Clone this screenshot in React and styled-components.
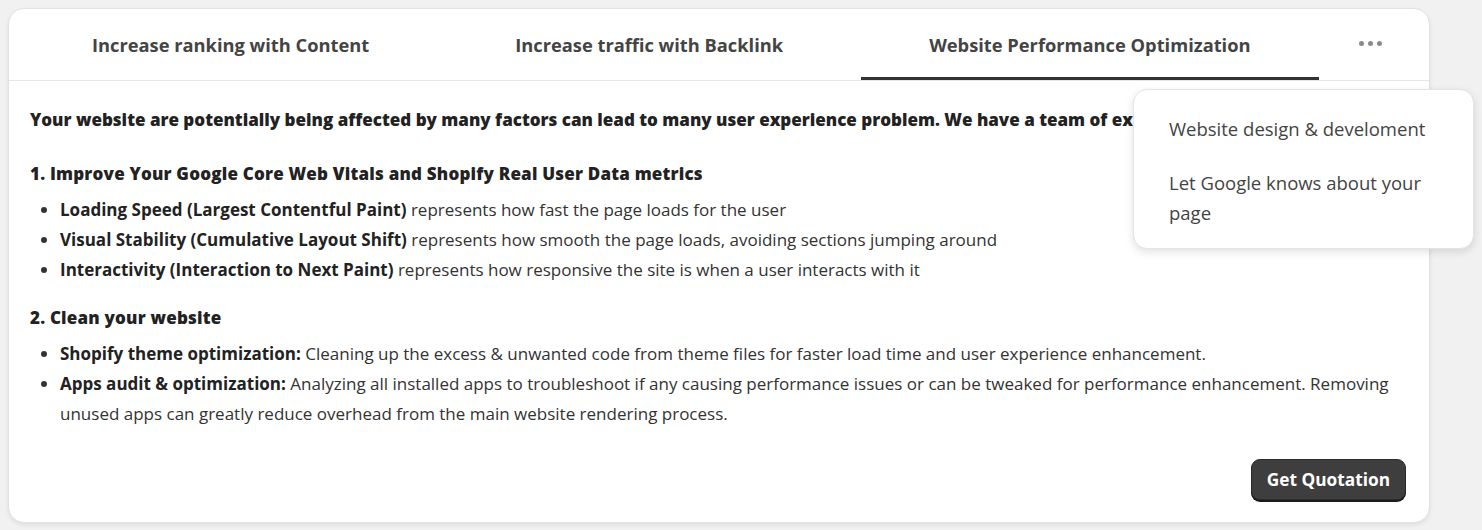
import React from "react";
import styled, { createGlobalStyle } from "styled-components";

const GlobalStyle = createGlobalStyle`
  body {
    margin: 0;
    background: #f1f1f1;
    font-family: "Open Sans", "Noto Sans", Arial, sans-serif;
    color: #333;
  }
`;

const Page = styled.div`
  padding: 8px;
`;

const Card = styled.div`
  position: relative;
  width: 1422px;
  box-sizing: border-box;
  height: 515px;
  background: #fff;
  border: 1px solid #e2e2e2;
  border-radius: 16px;
  box-shadow: 0 2px 4px rgba(0, 0, 0, 0.08);
  display: flex;
  flex-direction: column;
`;

const TabBar = styled.div`
  display: flex;
  align-items: stretch;
  gap: 10px;
  padding: 0 15px;
  height: 71px;
  border-bottom: 1px solid #e6e6e6;
`;

const Tab = styled.div`
  display: flex;
  align-items: center;
  justify-content: center;
  padding: 3px 68px 0;
  font-size: 18.3px;
  font-weight: 700;
  color: #444;
  border-bottom: 3px solid ${(p) => (p.$active ? "#333" : "transparent")};
  white-space: nowrap;
`;

const More = styled.div`
  flex: 1;
  display: flex;
  align-items: center;
  justify-content: center;
  gap: 4px;
  padding: 0 2px 2px 0;
`;

const Dot = styled.span`
  width: 5px;
  height: 5px;
  border-radius: 50%;
  background: #8a8a8a;
`;

const Menu = styled.div`
  position: absolute;
  left: 1124px;
  top: 80px;
  width: 341px;
  box-sizing: border-box;
  padding: 24px 35px 20px;
  background: #fff;
  border: 1px solid #e4e4e4;
  border-radius: 14px;
  box-shadow: 0 3px 8px rgba(0, 0, 0, 0.12);
  z-index: 2;
`;

const MenuItem = styled.div`
  font-size: 18.5px;
  line-height: 30px;
  color: #444;
  & + & {
    margin-top: 24px;
  }
`;

const Body = styled.div`
  flex: 1;
  display: flex;
  flex-direction: column;
  padding: 24px 21px 22px;
  overflow: hidden;
`;

const Intro = styled.p`
  margin: 0;
  font-size: 17px;
  font-weight: 800;
  line-height: 30px;
  color: #222;
  white-space: nowrap;
`;

const SectionTitle = styled.h3`
  margin: ${(p) => p.$top}px 0 6px;
  font-size: 17px;
  font-weight: 800;
  letter-spacing: 0.2px;
  line-height: 30px;
  color: #222;
`;

const List = styled.ul`
  margin: 0;
  padding-left: 30px;
`;

const Item = styled.li`
  font-size: 17px;
  line-height: 30px;
  color: #333;
`;

const Lead = styled.strong`
  font-weight: 700;
  color: #222;
`;

const Footer = styled.div`
  margin-top: auto;
  display: flex;
  justify-content: flex-end;
  padding-right: 2px;
`;

const Button = styled.button`
  height: 41px;
  padding: 0 15px;
  border-radius: 9px;
  background: #3e3e3e;
  border: 1px solid #2a2a2a;
  box-shadow: 0 2px 0 #1c1c1c;
  color: #fff;
  font-family: inherit;
  font-size: 17.3px;
  font-weight: 700;
`;

const vitals = [
  ["Loading Speed (Largest Contentful Paint)", "represents how fast the page loads for the user"],
  [
    "Visual Stability (Cumulative Layout Shift)",
    "represents how smooth the page loads, avoiding sections jumping around",
  ],
  [
    "Interactivity (Interaction to Next Paint)",
    "represents how responsive the site is when a user interacts with it",
  ],
];

const cleanup = [
  [
    "Shopify theme optimization:",
    "Cleaning up the excess & unwanted code from theme files for faster load time and user experience enhancement.",
  ],
  [
    "Apps audit & optimization:",
    "Analyzing all installed apps to troubleshoot if any causing performance issues or can be tweaked for performance enhancement. Removing unused apps can greatly reduce overhead from the main website rendering process.",
  ],
];

export default function App() {
  return (
    <Page>
      <GlobalStyle />
      <Card>
        <TabBar>
          <Tab>Increase ranking with Content</Tab>
          <Tab>Increase traffic with Backlink</Tab>
          <Tab $active>Website Performance Optimization</Tab>
          <More>
            <Dot />
            <Dot />
            <Dot />
          </More>
        </TabBar>
        <Menu>
          <MenuItem>Website design &amp; develoment</MenuItem>
          <MenuItem>Let Google knows about your page</MenuItem>
        </Menu>
        <Body>
          <Intro>
            Your website are potentially being affected by many factors can lead to many user
            experience problem. We have a team of experts
          </Intro>
          <SectionTitle $top={24}>
            1. Improve Your Google Core Web Vitals and Shopify Real User Data metrics
          </SectionTitle>
          <List>
            {vitals.map(([lead, text]) => (
              <Item key={lead}>
                <Lead>{lead}</Lead> {text}
              </Item>
            ))}
          </List>
          <SectionTitle $top={18}>2. Clean your website</SectionTitle>
          <List>
            {cleanup.map(([lead, text]) => (
              <Item key={lead}>
                <Lead>{lead}</Lead> {text}
              </Item>
            ))}
          </List>
          <Footer>
            <Button>Get Quotation</Button>
          </Footer>
        </Body>
      </Card>
    </Page>
  );
}
